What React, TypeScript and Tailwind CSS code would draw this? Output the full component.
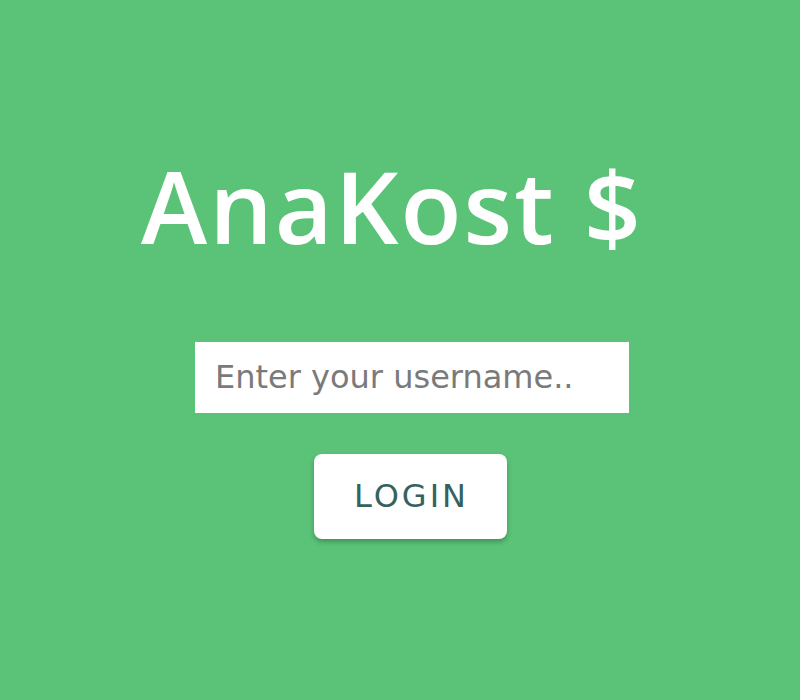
export default function App() {
  return (
    <div className="h-[700px] w-full bg-[#5ac378] flex flex-col items-center justify-center pl-[24px] pb-[10px]">
      <h1 className="mr-[40px] mt-[3px] mb-[87px] text-[100px] leading-none font-semibold text-white tracking-[2px] font-['Open_Sans',sans-serif]">
        AnaKost $
      </h1>
      <input
        type="text"
        placeholder="Enter your username.."
        className="w-[434px] h-[71px] bg-white pl-[20px] pr-[10px] text-[32px] text-gray-700 placeholder:text-[#7a7a7a] outline-none font-['DejaVu_Sans',sans-serif]"
      />
      <button className="mt-[41px] mr-[4px] w-[193px] h-[85px] bg-white rounded-lg shadow-[0_3px_5px_rgba(0,0,0,0.25)] pl-[3px] text-[32px] text-[#35625f] tracking-[3px] font-['DejaVu_Sans',sans-serif]">
        LOGIN
      </button>
    </div>
  );
}
